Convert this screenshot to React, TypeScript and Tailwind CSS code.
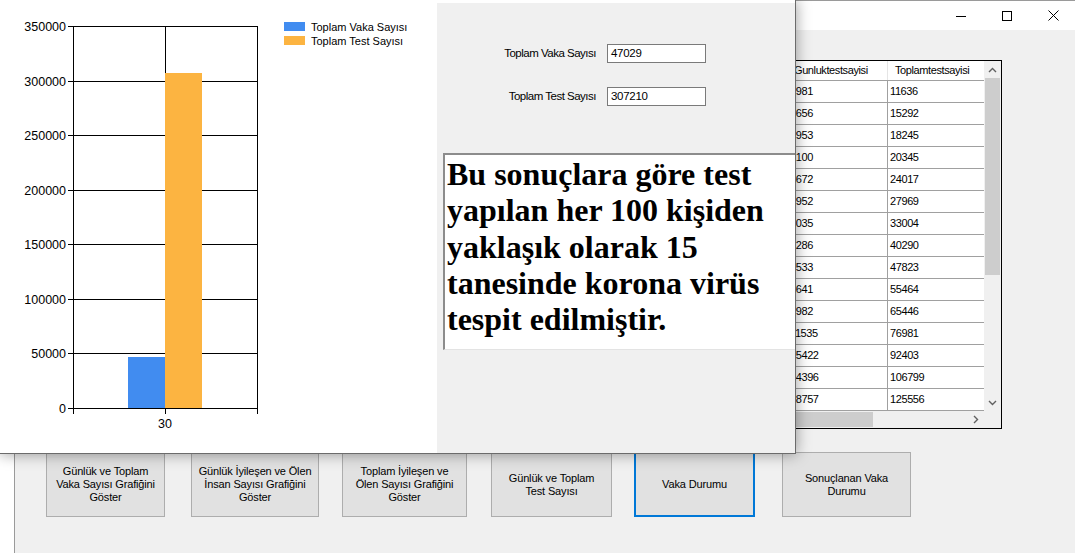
import React from "react";

const rows: [string, string][] = [
  ["1981", "11636"],
  ["3656", "15292"],
  ["2953", "18245"],
  ["2100", "20345"],
  ["3672", "24017"],
  ["3952", "27969"],
  ["5035", "33004"],
  ["7286", "40290"],
  ["7533", "47823"],
  ["7641", "55464"],
  ["9982", "65446"],
  ["11535", "76981"],
  ["15422", "92403"],
  ["14396", "106799"],
  ["18757", "125556"],
];

function Chart() {
  const ticks = [0, 50000, 100000, 150000, 200000, 250000, 300000, 350000];
  const y = (v: number) => Math.round(408 - (v / 350000) * 382);
  const font = "'Liberation Sans', Arial, sans-serif";
  return (
    <svg width="437" height="451" className="block">
      {ticks.map((t) => (
        <line key={"g" + t} x1={68} x2={257} y1={y(t) + 0.5} y2={y(t) + 0.5} stroke="#000" strokeWidth={1} />
      ))}
      {[73, 165, 257].map((x) => (
        <line key={"v" + x} x1={x + 0.5} x2={x + 0.5} y1={26} y2={414} stroke="#000" strokeWidth={1} />
      ))}
      <rect x={128} y={357} width={37} height={51} fill="#418cf0" />
      <rect x={165} y={73} width={37} height={335} fill="#fcb441" />
      <line x1={68} x2={257} y1={408.5} y2={408.5} stroke="#000" strokeWidth={1} />
      {ticks.map((t) => (
        <text key={"l" + t} x={66} y={y(t) + 4.5} textAnchor="end" fontSize={12.5} fontFamily={font} fill="#000">
          {t}
        </text>
      ))}
      <text x={165} y={427.5} textAnchor="middle" fontSize={12.5} fontFamily={font} fill="#000">
        30
      </text>
      <rect x={284} y={22} width={21} height={9} fill="#418cf0" />
      <rect x={284} y={36} width={21} height={9} fill="#fcb441" />
      <text x={311} y={31} fontSize={11} fontFamily={font} fill="#000">
        Toplam Vaka Sayısı
      </text>
      <text x={311} y={45} fontSize={11} fontFamily={font} fill="#000">
        Toplam Test Sayısı
      </text>
    </svg>
  );
}

function ChevUp() {
  return (
    <svg width="9" height="6" viewBox="0 0 9 6">
      <polyline points="1,5 4.5,1.5 8,5" fill="none" stroke="#606060" strokeWidth="1.4" />
    </svg>
  );
}
function ChevDown() {
  return (
    <svg width="9" height="6" viewBox="0 0 9 6">
      <polyline points="1,1 4.5,4.5 8,1" fill="none" stroke="#606060" strokeWidth="1.4" />
    </svg>
  );
}
function ChevRight() {
  return (
    <svg width="6" height="9" viewBox="0 0 6 9">
      <polyline points="1,1 4.5,4.5 1,8" fill="none" stroke="#606060" strokeWidth="1.4" />
    </svg>
  );
}

function Grid() {
  return (
    <div className="w-[442px] border border-black bg-white flex text-[11px] tracking-[-0.4px]">
      <div className="w-[423px] flex flex-col">
        <div className="h-[20px] flex border-b border-[#a0a0a0] bg-white">
          <div className="w-[226px]" />
          <div className="w-[100px] border-l border-[#e5e5e5] pl-[6px] flex items-center whitespace-nowrap">
            Gunluktestsayisi
          </div>
          <div className="w-[97px] border-l border-[#e5e5e5] pl-[7px] flex items-center whitespace-nowrap">
            Toplamtestsayisi
          </div>
        </div>
        {rows.map((r, i) => (
          <div key={i} className="h-[22px] flex border-b border-[#a0a0a0]">
            <div className="w-[226px]" />
            <div className="w-[100px] border-l border-[#a0a0a0] pl-[2px] flex items-center">{r[0]}</div>
            <div className="w-[97px] border-l border-[#a0a0a0] pl-[2px] flex items-center">{r[1]}</div>
          </div>
        ))}
        <div className="h-[17px] bg-[#f0f0f0] flex items-center">
          <div className="ml-[39px] w-[273px] h-[15px] bg-[#cdcdcd]" />
          <div className="flex-1" />
          <div className="w-[17px] h-[17px] flex items-center justify-center">
            <ChevRight />
          </div>
        </div>
      </div>
      <div className="w-[17px] flex flex-col bg-[#f0f0f0]">
        <div className="h-[17px] flex items-center justify-center">
          <ChevUp />
        </div>
        <div className="ml-[1px] w-[15px] h-[197px] bg-[#cdcdcd]" />
        <div className="flex-1" />
        <div className="h-[17px] flex items-center justify-center">
          <ChevDown />
        </div>
        <div className="h-[17px] bg-[#f0f0f0]" />
      </div>
    </div>
  );
}

function Btn({ w, ml, focused, children }: { w: string; ml: string; focused?: boolean; children: React.ReactNode }) {
  return (
    <div
      className={`${w} ${ml} h-[65px] shrink-0 bg-[#e1e1e1] flex items-center justify-center text-center text-[11px] leading-[13px] tracking-[-0.15px] ${
        focused ? "border-2 border-[#0078d7]" : "border border-[#adadad]"
      }`}
    >
      <div>{children}</div>
    </div>
  );
}

export default function App() {
  return (
    <div className="relative w-[1075px] h-[553px] overflow-hidden bg-white font-['Liberation_Sans',Arial,sans-serif] text-black">
      {/* background window */}
      <div className="absolute left-[14px] top-0 w-[1062px] h-[560px] flex flex-col border-l border-t border-[#9a9a9a] bg-[#f0f0f0]">
        <div className="h-[29px] bg-white flex justify-end shrink-0">
          <div className="w-[46px] flex items-center justify-center">
            <svg width="10" height="10" viewBox="0 0 10 10">
              <line x1="0" x2="10" y1="5.5" y2="5.5" stroke="#000" strokeWidth="1" />
            </svg>
          </div>
          <div className="w-[46px] flex items-center justify-center">
            <svg width="10" height="10" viewBox="0 0 10 10">
              <rect x="0.5" y="0.5" width="9" height="9" fill="none" stroke="#000" strokeWidth="1" />
            </svg>
          </div>
          <div className="w-[46px] flex items-center justify-center">
            <svg width="11" height="11" viewBox="0 0 11 11">
              <path d="M0.5 0.5 L10.5 10.5 M10.5 0.5 L0.5 10.5" stroke="#000" strokeWidth="1" fill="none" />
            </svg>
          </div>
        </div>
        <div className="flex-1 flex flex-col">
          <div className="pt-[30px] flex justify-end pr-[74px]">
            <Grid />
          </div>
          <div className="mt-[23px] flex pl-[31px]">
            <Btn w="w-[119px]" ml="ml-0">
              Günlük ve Toplam
              <br />
              Vaka Sayısı Grafiğini
              <br />
              Göster
            </Btn>
            <Btn w="w-[128px]" ml="ml-[26px]">
              Günlük İyileşen ve Ölen
              <br />
              İnsan Sayısı Grafiğini
              <br />
              Göster
            </Btn>
            <Btn w="w-[125px]" ml="ml-[23px]">
              Toplam İyileşen ve
              <br />
              Ölen Sayısı Grafiğini
              <br />
              Göster
            </Btn>
            <Btn w="w-[121px]" ml="ml-[24px]">
              Günlük ve Toplam
              <br />
              Test Sayısı
            </Btn>
            <Btn w="w-[121px]" ml="ml-[22px]" focused>
              Vaka Durumu
            </Btn>
            <Btn w="w-[129px]" ml="ml-[27px]">
              Sonuçlanan Vaka
              <br />
              Durumu
            </Btn>
          </div>
        </div>
      </div>

      {/* foreground window */}
      <div className="absolute left-0 top-0 w-[796px] h-[454px] flex border-r border-b border-[#6b6b6b] shadow-[0_0_14px_rgba(0,0,0,0.4)] overflow-hidden">
        <div className="w-[437px] bg-white shrink-0">
          <Chart />
        </div>
        <div className="flex-1 bg-[#f0f0f0] border-t-[3px] border-white flex flex-col overflow-hidden text-[11.5px] tracking-[-0.5px]">
          <div className="mt-[41px] flex items-center">
            <div className="w-[159px] text-right whitespace-nowrap">Toplam Vaka Sayısı</div>
            <div className="ml-[11px] w-[99px] h-[19px] border border-[#7a7a7a] bg-white px-[3px] leading-[17px] tracking-[-0.3px]">47029</div>
          </div>
          <div className="mt-[24px] flex items-center">
            <div className="w-[159px] text-right whitespace-nowrap">Toplam Test Sayısı</div>
            <div className="ml-[11px] w-[99px] h-[19px] border border-[#7a7a7a] bg-white px-[3px] leading-[17px] tracking-[-0.3px]">307210</div>
          </div>
          <div className="mt-[47px] ml-[6px] w-[360px] h-[197px] shrink-0 bg-white border-l-2 border-t-2 border-[#8c8c8c] border-b border-b-[#e3e3e3] pl-[2px] pt-[1px] font-['Liberation_Serif','Times_New_Roman',serif] font-bold text-[32px] leading-[36.25px] tracking-normal whitespace-nowrap">
            <div>Bu sonuçlara göre test</div>
            <div>yapılan her 100 kişiden</div>
            <div>yaklaşık olarak 15</div>
            <div>tanesinde korona virüs</div>
            <div>tespit edilmiştir.</div>
          </div>
        </div>
      </div>
    </div>
  );
}
